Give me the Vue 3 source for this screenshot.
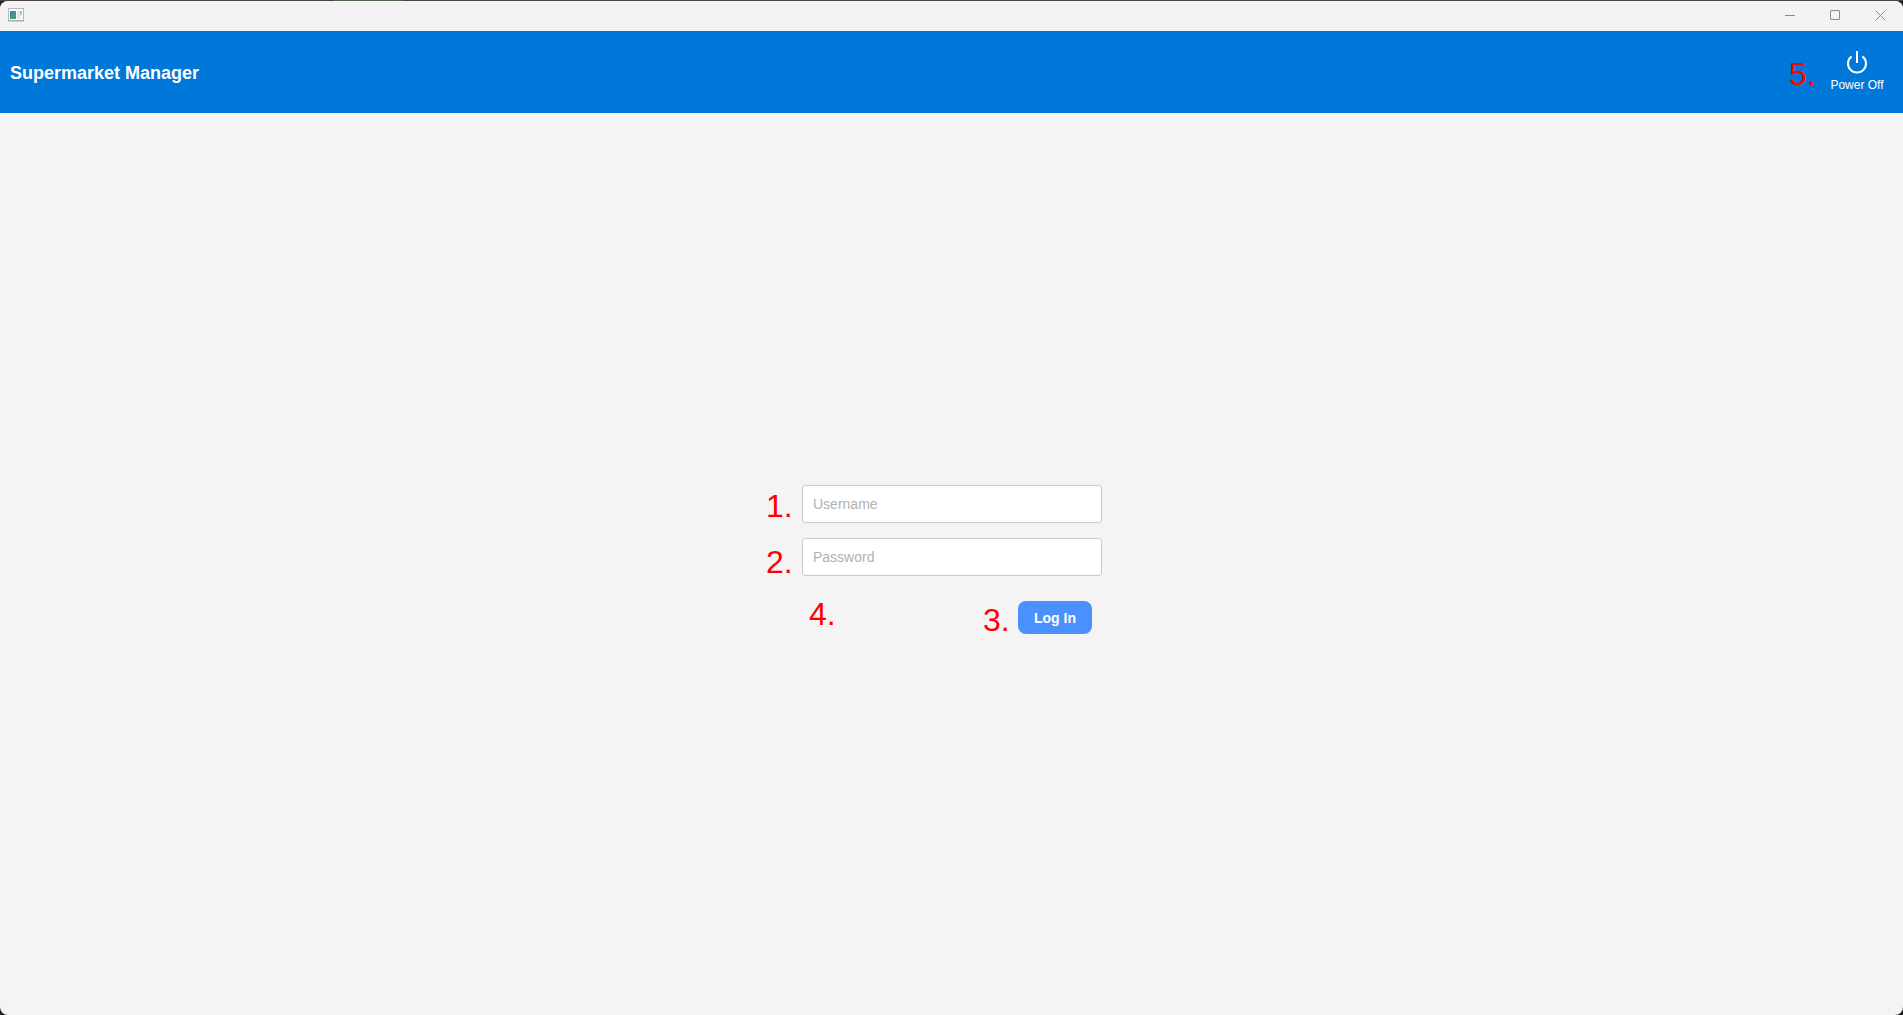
<script setup>
import { ref } from 'vue'

const username = ref('')
const password = ref('')
</script>

<template>
  <div class="desktop">
    <div class="window">
      <div class="titlebar">
        <svg class="app-icon" width="16" height="14" viewBox="0 0 16 14" aria-hidden="true">
          <defs>
            <linearGradient id="pane" x1="0" y1="0" x2="1" y2="1">
              <stop offset="0" stop-color="#4779a0" />
              <stop offset="1" stop-color="#4fa673" />
            </linearGradient>
          </defs>
          <rect x="0.5" y="0.5" width="15" height="12" fill="#fafafa" stroke="#b4babd" />
          <path d="M0 13h16" stroke="#a4a9ac" />
          <rect x="2" y="3" width="6" height="8" fill="url(#pane)" />
          <rect x="9" y="3" width="3" height="8" fill="#e6e6e6" />
          <rect x="12" y="3" width="2" height="3" fill="#9bbfd5" />
          <rect x="12" y="6" width="2" height="2" fill="#c9e4d2" />
        </svg>
        <div class="window-controls">
          <button type="button" aria-label="Minimize">
            <svg width="11" height="11" viewBox="0 0 11 11"><path d="M0 5.5h10" /></svg>
          </button>
          <button type="button" aria-label="Maximize">
            <svg width="11" height="11" viewBox="0 0 11 11"><rect x="0.5" y="0.5" width="9" height="9" rx="0.5" /></svg>
          </button>
          <button type="button" aria-label="Close">
            <svg width="11" height="11" viewBox="0 0 11 11"><path d="M0.5 0.5l10 10M10.5 0.5l-10 10" /></svg>
          </button>
        </div>
      </div>

      <header class="header">
        <h1>Supermarket Manager</h1>
        <div class="anchor">
          <span class="marker marker-power">5.</span>
          <button type="button" class="power">
            <svg width="24" height="24" viewBox="0 0 24 24" aria-hidden="true">
              <path d="M12 0v12M6.6 5.4a9 9 0 1 0 10.8 0" />
            </svg>
            <span>Power Off</span>
          </button>
        </div>
      </header>

      <main class="content">
        <form class="login" @submit.prevent>
          <div class="anchor">
            <span class="marker marker-username">1.</span>
            <input v-model="username" type="text" placeholder="Username" aria-label="Username" />
          </div>
          <div class="anchor">
            <span class="marker marker-password">2.</span>
            <input v-model="password" type="password" placeholder="Password" aria-label="Password" />
          </div>
          <div class="anchor actions">
            <span class="marker marker-message">4.</span>
            <div class="anchor">
              <span class="marker marker-submit">3.</span>
              <button type="submit" class="submit">Log In</button>
            </div>
          </div>
        </form>
      </main>
    </div>
  </div>
</template>

<style>
body {
  margin: 0;
}
</style>

<style scoped>
.desktop {
  box-sizing: border-box;
  min-height: 100vh;
  padding-top: 1px;
  display: flex;
  background: linear-gradient(90deg, transparent 334px, #53664f 334px, #53664f 403px, transparent 403px) 0 0 / 100% 1px no-repeat, linear-gradient(#4a4447 1px, #222 1px);
  font-family: "Liberation Sans", Arial, sans-serif;
}

.window {
  flex: 1;
  display: flex;
  flex-direction: column;
  border-radius: 8px;
  overflow: hidden;
  background: #f4f4f4;
}

button {
  border: 0;
  padding: 0;
  background: none;
  font-family: inherit;
}

.titlebar {
  height: 30px;
  display: flex;
  justify-content: space-between;
  background: #f3f3f3;
}

.app-icon {
  margin: 7px 8px;
}

.window-controls {
  display: flex;
}

.window-controls button {
  width: 45px;
  padding-bottom: 2px;
  display: flex;
  align-items: center;
  justify-content: center;
}

.window-controls svg {
  fill: none;
  stroke: #8c8c8c;
}

.header {
  height: 82px;
  padding: 0 10px;
  display: flex;
  align-items: center;
  justify-content: space-between;
  background: #0078d9;
  color: #fff;
}

h1 {
  margin: 0;
  padding-top: 2px;
  font-size: 18px;
  line-height: 22px;
}

.anchor {
  position: relative;
}

.power {
  width: 72px;
  padding-bottom: 1px;
  display: flex;
  flex-direction: column;
  align-items: center;
  gap: 3px;
  color: #fff;
  font-size: 12px;
  line-height: 14px;
}

.power svg {
  fill: none;
  stroke: currentColor;
  stroke-width: 2;
}

.content {
  flex: 1;
  padding: 1px 0 0 1px;
  display: flex;
  align-items: center;
  justify-content: center;
}

.login {
  width: 300px;
  display: flex;
  flex-direction: column;
  gap: 15px;
}

input {
  box-sizing: border-box;
  display: block;
  width: 100%;
  height: 38px;
  padding: 0 10px;
  border: 1px solid #ccc;
  border-radius: 3px;
  background: #fff;
  box-shadow: inset 0 0 2px #f4f4f4;
  font-family: inherit;
  font-size: 14px;
}

input::placeholder {
  color: #b2b2b2;
}

.actions {
  padding: 10px;
  display: flex;
  justify-content: flex-end;
}

.submit {
  display: block;
  height: 33px;
  padding: 0 16px;
  border-radius: 8px;
  background: #4a90ff;
  color: #fff;
  font-size: 14px;
  font-weight: bold;
}

.marker {
  position: absolute;
  color: #f00;
  font-size: 32px;
  line-height: 32px;
}

.marker-username {
  top: 5px;
  left: -36px;
}

.marker-password {
  top: 8px;
  left: -36px;
}

.marker-submit {
  top: 3px;
  left: -35px;
}

.marker-message {
  top: 7px;
  left: 7px;
}

.marker-power {
  top: 7px;
  left: -32px;
}
</style>
